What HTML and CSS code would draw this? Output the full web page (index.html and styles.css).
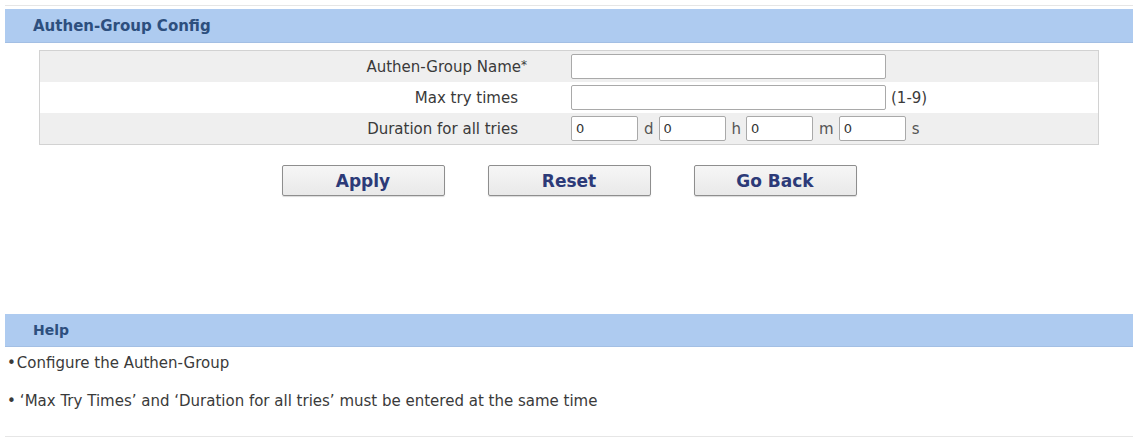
FILE: index.html
```html
<!DOCTYPE html>
<html lang="en">
<head>
    <meta charset="UTF-8">
    <title>Authen-Group Config</title>
    <link rel="stylesheet" href="styles.css">
</head>
<body>
    <div class="page">
        <div class="bar">Authen-Group Config</div>

        <table class="config">
            <tr class="odd">
                <td class="label">Authen-Group Name<span class="req">*</span></td>
                <td class="field"><input type="text" class="wide"></td>
            </tr>
            <tr>
                <td class="label">Max try times</td>
                <td class="field"><input type="text" class="wide"><span class="hint">(1-9)</span></td>
            </tr>
            <tr class="odd">
                <td class="label">Duration for all tries</td>
                <td class="field">
                    <input type="text" class="short" value="0"><span class="unit">d</span><input type="text" class="short" value="0"><span class="unit">h</span><input type="text" class="short" value="0"><span class="unit">m</span><input type="text" class="short" value="0"><span class="unit">s</span>
                </td>
            </tr>
        </table>

        <div class="actions">
            <button>Apply</button>
            <button>Reset</button>
            <button>Go Back</button>
        </div>

        <div class="bar help-bar">Help</div>
        <ul class="help">
            <li class="tight">Configure the Authen-Group</li>
            <li>&lsquo;Max Try Times&rsquo; and &lsquo;Duration for all tries&rsquo; must be entered at the same time</li>
        </ul>
    </div>
</body>
</html>
```

FILE: styles.css
```css
html, body {
    margin: 0;
    background: #fff;
}

body {
    padding: 5px 4px 0 5px;
    font-family: "DejaVu Sans", Verdana, sans-serif;
    font-size: 15px;
    color: #3a3a3a;
}

.page {
    border-top: 1px solid #e6e6e6;
    border-bottom: 1px solid #e6e6e6;
    padding-top: 3px;
    height: 432px;
    box-sizing: border-box;
}

.bar {
    height: 34px;
    line-height: 34px;
    padding-left: 28px;
    background: #aecbf0;
    border-bottom: 1px solid #a3bfe4;
    box-sizing: border-box;
    font-weight: bold;
    font-size: 15px;
    color: #2d4f7e;
}

.config {
    margin: 7px 0 0 34px;
    width: 1060px;
    border-collapse: collapse;
    border: 1px solid #d2d2d2;
}
.config td {
    height: 31px;
    padding: 0;
}
.config tr.odd {
    background: #efefef;
}
.label {
    width: 478px;
    padding-right: 52px !important;
    text-align: right;
}
.req {
    font-size: 12px;
    vertical-align: top;
    margin-right: -9px;
}
.field {
    padding-left: 1px !important;
}

input {
    height: 25px;
    box-sizing: border-box;
    border: 1px solid #a9a9a9;
    border-radius: 2px;
    padding: 0 4px;
    font-family: "DejaVu Sans", Verdana, sans-serif;
    font-size: 13px;
    color: #333;
    vertical-align: middle;
    background: #fff;
}
input.wide {
    width: 315px;
}
input.short {
    width: 67px;
}
.hint {
    margin-left: 5px;
    vertical-align: middle;
}
.unit {
    display: inline-block;
    margin: 0 5px 0 6px;
    vertical-align: middle;
    color: #555;
}

.actions {
    display: flex;
    justify-content: center;
    gap: 43px;
    width: 1060px;
    margin: 20px 0 0 34px;
}
button {
    width: 163px;
    height: 31px;
    background: linear-gradient(#f6f6f6, #e9e9e9);
    border: 1px solid #8e8e8e;
    border-radius: 2px;
    box-shadow: 0 1px 1px rgba(0, 0, 0, 0.15);
    font-family: "DejaVu Sans", Verdana, sans-serif;
    font-weight: bold;
    font-size: 17px;
    color: #2c3a78;
    cursor: pointer;
}

.help-bar {
    margin-top: 118px;
    height: 33px;
    line-height: 32px;
    font-size: 14px;
}

.help {
    list-style: none;
    margin: 0;
    padding: 0 0 0 2px;
    font-size: 15px;
}
.help li {
    line-height: 18px;
    margin-top: 20px;
}
.help li::before {
    content: "\2022";
    margin-right: 4px;
}
.help li.tight {
    margin-top: 7px;
}
.help li.tight::before {
    margin-right: 1px;
}
```
